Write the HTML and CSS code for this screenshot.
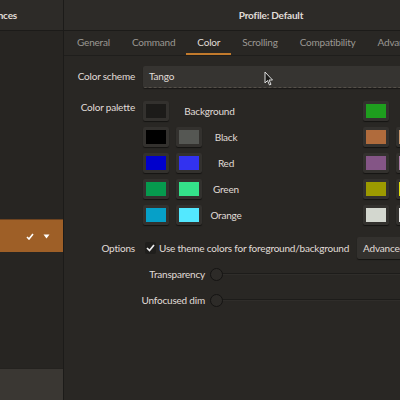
FILE: index.html
```html
<!DOCTYPE html>
<html lang="en">
<head>
    <meta charset="UTF-8">
    <title>Preferences</title>
    <link rel="stylesheet" href="styles.css">
</head>
<body>
    <div class="window">
        <div class="sidebar">
            <div class="side-head"><span class="side-title">Preferences</span></div>
            <div class="side-list">
                <div class="profile-row">
                    <svg class="row-icon" width="8" height="7" viewBox="0 0 8 7"><path d="M1 4 L3 6 L7 1" fill="none" stroke="#fff" stroke-width="1.6"/></svg>
                    <svg class="row-icon" width="7" height="5" viewBox="0 0 7 5"><path d="M0.5 0.5 H6.5 L3.5 4.5 Z" fill="#fff"/></svg>
                </div>
            </div>
            <div class="side-foot"></div>
        </div>

        <div class="main">
            <div class="head">Profile: Default</div>
            <div class="tabs">
                <div class="tab">General</div>
                <div class="tab">Command</div>
                <div class="tab active">Color</div>
                <div class="tab">Scrolling</div>
                <div class="tab">Compatibility</div>
                <div class="tab">Advanced</div>
            </div>

            <div class="content">
                <div class="field">
                    <div class="label">Color scheme</div>
                    <div class="combo">Tango
                        <svg class="cursor" width="10" height="15" viewBox="0 0 10 15"><path d="M1 1 V12 L3.5 9.5 L5.5 14 L7 13.3 L5 9 H8.5 Z" fill="#1b1a18" stroke="#ddd" stroke-width="1"/></svg>
                    </div>
                </div>

                <div class="field palette-field">
                    <div class="label">Color palette</div>
                    <div class="palette">
                        <div class="pal-row">
                            <div class="swatch"><span style="background:#1c1b19"></span></div>
                            <div class="pal-name">Background</div>
                        </div>
                        <div class="pal-row">
                            <div class="swatch"><span style="background:#000000"></span></div>
                            <div class="swatch"><span style="background:#555753"></span></div>
                            <div class="pal-name">Black</div>
                        </div>
                        <div class="pal-row">
                            <div class="swatch"><span style="background:#0000cc"></span></div>
                            <div class="swatch"><span style="background:#3232f0"></span></div>
                            <div class="pal-name">Red</div>
                        </div>
                        <div class="pal-row">
                            <div class="swatch"><span style="background:#069a4e"></span></div>
                            <div class="swatch"><span style="background:#34e28a"></span></div>
                            <div class="pal-name">Green</div>
                        </div>
                        <div class="pal-row">
                            <div class="swatch"><span style="background:#06a0c8"></span></div>
                            <div class="swatch"><span style="background:#53e8ff"></span></div>
                            <div class="pal-name">Orange</div>
                        </div>
                    </div>
                    <div class="palette right">
                        <div class="pal-row">
                            <div class="swatch"><span style="background:#1e9e1e"></span></div>
                        </div>
                        <div class="pal-row">
                            <div class="swatch"><span style="background:#b06b3c"></span></div>
                            <div class="swatch"><span style="background:#c89a72"></span></div>
                        </div>
                        <div class="pal-row">
                            <div class="swatch"><span style="background:#845586"></span></div>
                            <div class="swatch"><span style="background:#ad7fa8"></span></div>
                        </div>
                        <div class="pal-row">
                            <div class="swatch"><span style="background:#9c9a00"></span></div>
                            <div class="swatch"><span style="background:#e0e010"></span></div>
                        </div>
                        <div class="pal-row">
                            <div class="swatch"><span style="background:#d3d7cf"></span></div>
                            <div class="swatch"><span style="background:#eeeeec"></span></div>
                        </div>
                    </div>
                </div>

                <div class="field options">
                    <div class="label">Options</div>
                    <div class="opt-line">
                        <span class="check">
                            <svg width="9" height="8" viewBox="0 0 9 8"><path d="M1 4 L3.5 6.5 L8 1" fill="none" stroke="#eee" stroke-width="1.7"/></svg>
                        </span>
                        <span class="opt-text">Use theme colors for foreground/background</span>
                        <span class="button">Advanced</span>
                    </div>
                </div>

                <div class="sliders">
                    <div class="slider-row">
                        <div class="slider-label">Transparency</div>
                        <div class="knob"></div>
                        <div class="track"></div>
                    </div>
                    <div class="slider-row">
                        <div class="slider-label">Unfocused dim</div>
                        <div class="knob"></div>
                        <div class="track"></div>
                    </div>
                </div>
            </div>
        </div>
    </div>
</body>
</html>
```

FILE: styles.css
```css
body {
    margin: 0;
    width: 400px;
    height: 400px;
    overflow: hidden;
    background-color: #292724;
    font-family: 'Lato', 'Noto Sans', sans-serif;
    font-size: 10px;
    letter-spacing: -0.2px;
    color: #e0ddd8;
}
.window {
    display: flex;
    width: 478px;
    height: 400px;
}
.sidebar {
    width: 63px;
    flex-shrink: 0;
    display: flex;
    flex-direction: column;
    background-color: #272522;
    border-right: 1px solid #1c1b19;
}
.side-head {
    height: 30px;
    flex-shrink: 0;
    background-color: #2d2b28;
    border-bottom: 1px solid #1c1b19;
    display: flex;
    align-items: center;
    justify-content: flex-end;
    overflow: hidden;
}
.side-title {
    white-space: nowrap;
    margin-right: 46px;
    font-weight: 700;
}
.side-list {
    flex: 1;
    padding-top: 188px;
}
.profile-row {
    height: 32px;
    background-color: #9e5f27;
    border-top: 1px solid #6d4320;
    display: flex;
    align-items: center;
    justify-content: flex-end;
    gap: 9px;
    padding-right: 13px;
}
.row-icon {
    display: block;
}
.side-foot {
    height: 31px;
    background-color: #3a3733;
    border-top: 1px solid #24221f;
}
.main {
    flex: 1;
    display: flex;
    flex-direction: column;
}
.head {
    height: 30px;
    flex-shrink: 0;
    background-color: #2d2b28;
    border-bottom: 1px solid #1c1b19;
    display: flex;
    align-items: center;
    justify-content: center;
    font-weight: 700;
}
.tabs {
    display: flex;
    height: 24px;
    padding-left: 2px;
    border-bottom: 1px solid #1f1e1c;
}
.tab {
    padding: 0 11px;
    line-height: 23px;
    color: #9b9893;
    white-space: nowrap;
    border-bottom: 2px solid transparent;
}
.tab.active {
    color: #e0ddd8;
    border-bottom-color: #c27a2c;
}
.content {
    padding-top: 10px;
}
.field {
    display: flex;
}
.label {
    width: 71px;
    text-align: right;
    padding-right: 8px;
    flex-shrink: 0;
}
.combo {
    position: relative;
    flex: 1;
    height: 21px;
    line-height: 21px;
    padding-left: 6px;
    background-color: #363431;
    border-radius: 2px;
    border-bottom: 1px dashed #555049;
    box-shadow: 0 1px 1px rgba(0, 0, 0, 0.4);
}
.combo .cursor {
    position: absolute;
    left: 121px;
    top: 5px;
}
.field > .label {
    line-height: 21px;
}
.palette-field {
    margin-top: 13px;
}
.palette-field > .label {
    line-height: 12px;
}
.palette {
    width: 100px;
    margin-right: 120px;
    flex-shrink: 0;
}
.pal-row {
    display: flex;
    align-items: center;
    gap: 7px;
    height: 20px;
    margin-bottom: 6px;
}
.swatch {
    width: 26px;
    height: 20px;
    flex-shrink: 0;
    box-sizing: border-box;
    padding: 3px;
    background-color: #33312e;
    border-radius: 2px;
    box-shadow: 0 1px 1px rgba(0, 0, 0, 0.5);
}
.swatch span {
    display: block;
    width: 100%;
    height: 100%;
}
.pal-name {
    flex: 1;
    text-align: center;
    white-space: nowrap;
}
.palette.right {
    width: auto;
    margin-right: 0;
}
.options {
    margin-top: 10px;
}
.options > .label {
    width: 60px;
    padding-left: 11px;
    line-height: 14px;
}
.opt-line {
    display: flex;
    align-items: center;
    margin-top: -4px;
}
.check {
    width: 11px;
    height: 12px;
    margin-left: 2px;
    margin-right: 3px;
    background-color: #1f1e1c;
    border-radius: 2px;
    display: flex;
    align-items: center;
    justify-content: center;
}
.opt-text {
    white-space: nowrap;
}
.button {
    margin-left: 8px;
    padding: 0 6px;
    height: 22px;
    line-height: 22px;
    background-color: #33312e;
    border-radius: 2px;
    box-shadow: 0 1px 1px rgba(0, 0, 0, 0.5);
    white-space: nowrap;
}
.sliders {
    margin-top: 2px;
}
.slider-row {
    display: flex;
    align-items: center;
    height: 26px;
}
.slider-label {
    width: 141px;
    text-align: right;
    padding-right: 5px;
    flex-shrink: 0;
}
.knob {
    width: 11px;
    height: 11px;
    border-radius: 50%;
    border: 1px solid #151413;
    background-color: #2d2b28;
    flex-shrink: 0;
}
.track {
    flex: 1;
    height: 1px;
    background-color: #1d1c1a;
    border-bottom: 1px solid #2f2d2a;
}
```
